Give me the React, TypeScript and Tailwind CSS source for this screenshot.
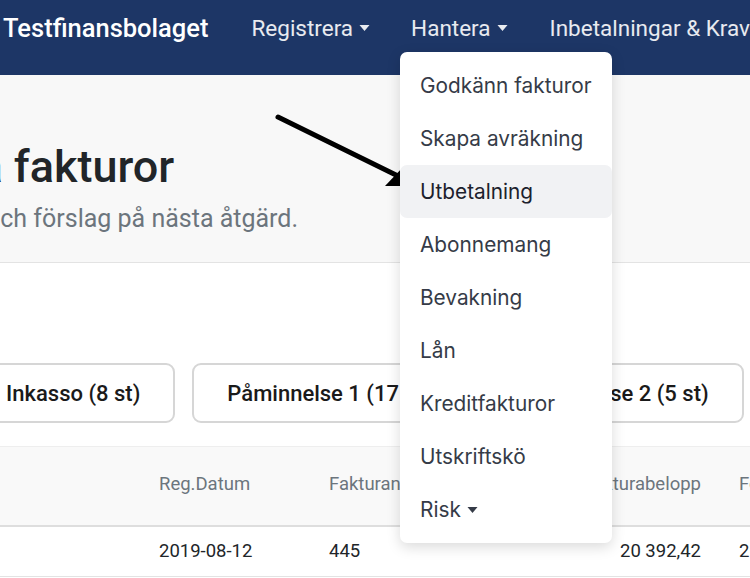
import React from "react";

const Caret = ({ className = "" }: { className?: string }) => (
  <svg viewBox="0 0 10 6" className={className} fill="currentColor">
    <path d="M0 0h10L5 6z" />
  </svg>
);

const menuItems = [
  "Godkänn fakturor",
  "Skapa avräkning",
  "Utbetalning",
  "Abonnemang",
  "Bevakning",
  "Lån",
  "Kreditfakturor",
  "Utskriftskö",
];

export default function App() {
  return (
    <div className="relative w-[750px] h-[578px] overflow-hidden bg-white font-['Roboto',sans-serif] text-[#212529]">
      {/* navbar */}
      <nav className="h-[75px] bg-[#1d3666] flex items-start pt-[11px] pl-[3px] whitespace-nowrap">
        <span className="text-white text-[25.5px] font-medium leading-[34px]">Testfinansbolaget</span>
        <div className="flex items-center ml-[43px] gap-[6px] text-[22.5px] leading-[34px] text-white/90">
          <span>Registrera</span>
          <Caret className="w-[11px] h-[6px]" />
        </div>
        <div className="flex items-center ml-[41px] gap-[6px] text-[22.5px] leading-[34px] text-white/90">
          <span>Hantera</span>
          <Caret className="w-[11px] h-[6px]" />
        </div>
        <div className="ml-[42px] text-[22.5px] leading-[34px] text-white/90">Inbetalningar &amp; Krav</div>
      </nav>

      {/* page header */}
      <header className="h-[188px] bg-[#f8f8f8] border-b border-[#e3e3e3] pt-[65px] whitespace-nowrap">
        <h1 className="text-[45px] font-medium leading-[54px] ml-[-157px]">Hantera fakturor</h1>
        <p className="text-[25px] leading-[32px] text-[#6c757d] mt-[9px] ml-[-14px]">och förslag på nästa åtgärd.</p>
      </header>

      {/* filter buttons */}
      <div className="flex gap-[17px] mt-[100px] ml-[-29px] whitespace-nowrap">
        {["Inkasso (8 st)", "Påminnelse 1 (17 st)", "Påminnelse 2 (5 st)"].map((t) => (
          <div
            key={t}
            className="shrink-0 h-[60px] px-[33px] flex items-center border-2 border-[#d6d6d6] rounded-[9px] text-[22px] font-medium text-[#1a1a1a]"
          >
            {t}
          </div>
        ))}
      </div>

      {/* table */}
      <div className="mt-[23px] text-[18.5px] whitespace-nowrap">
        <div className="h-[81px] bg-[#f9f9f9] border-t border-[#eeeeee] border-b-2 border-b-[#dedede] flex items-end pb-[26px] text-[#6c757d]">
          <span className="shrink-0 ml-[159px] w-[170px]">Reg.Datum</span>
          <span className="shrink-0 w-[213px]">Fakturanummer</span>
          <span className="shrink-0 w-[159px] text-right">Fakturabelopp</span>
          <span className="shrink-0 ml-[38px]">Förfallodatum</span>
        </div>
        <div className="h-[50px] border-b border-[#e3e3e3] flex items-center text-[#212529]">
          <span className="shrink-0 ml-[159px] w-[170px]">2019-08-12</span>
          <span className="shrink-0 w-[213px]">445</span>
          <span className="shrink-0 w-[159px] text-right">20 392,42</span>
          <span className="shrink-0 ml-[38px]">2019-09-11</span>
        </div>
      </div>

      {/* arrow annotation */}
      <svg className="absolute left-[270px] top-[110px] w-[150px] h-[85px]" viewBox="0 0 150 85">
        <line x1="8" y1="7" x2="128" y2="66" stroke="#000" strokeWidth="5" strokeLinecap="round" />
        <path d="M143 76 L115 76 L134 56 Z" fill="#000" />
      </svg>

      {/* dropdown menu */}
      <div className="absolute left-[400px] top-[52px] w-[212px] bg-white rounded-[7px] shadow-[0_4px_14px_rgba(0,0,0,0.15)] py-[7px] font-['Inter',sans-serif] text-[20.8px] text-[#353b47]">
        {menuItems.map((t) => (
          <div
            key={t}
            className={
              t === "Utbetalning"
                ? "h-[53px] flex items-center px-5 bg-[#f1f2f4] rounded-[7px] text-[#1c212c]"
                : "h-[53px] flex items-center px-5"
            }
          >
            {t}
          </div>
        ))}
        <div className="h-[53px] flex items-center px-5 gap-[6px]">
          <span>Risk</span>
          <Caret className="w-[11px] h-[6px]" />
        </div>
      </div>
    </div>
  );
}
